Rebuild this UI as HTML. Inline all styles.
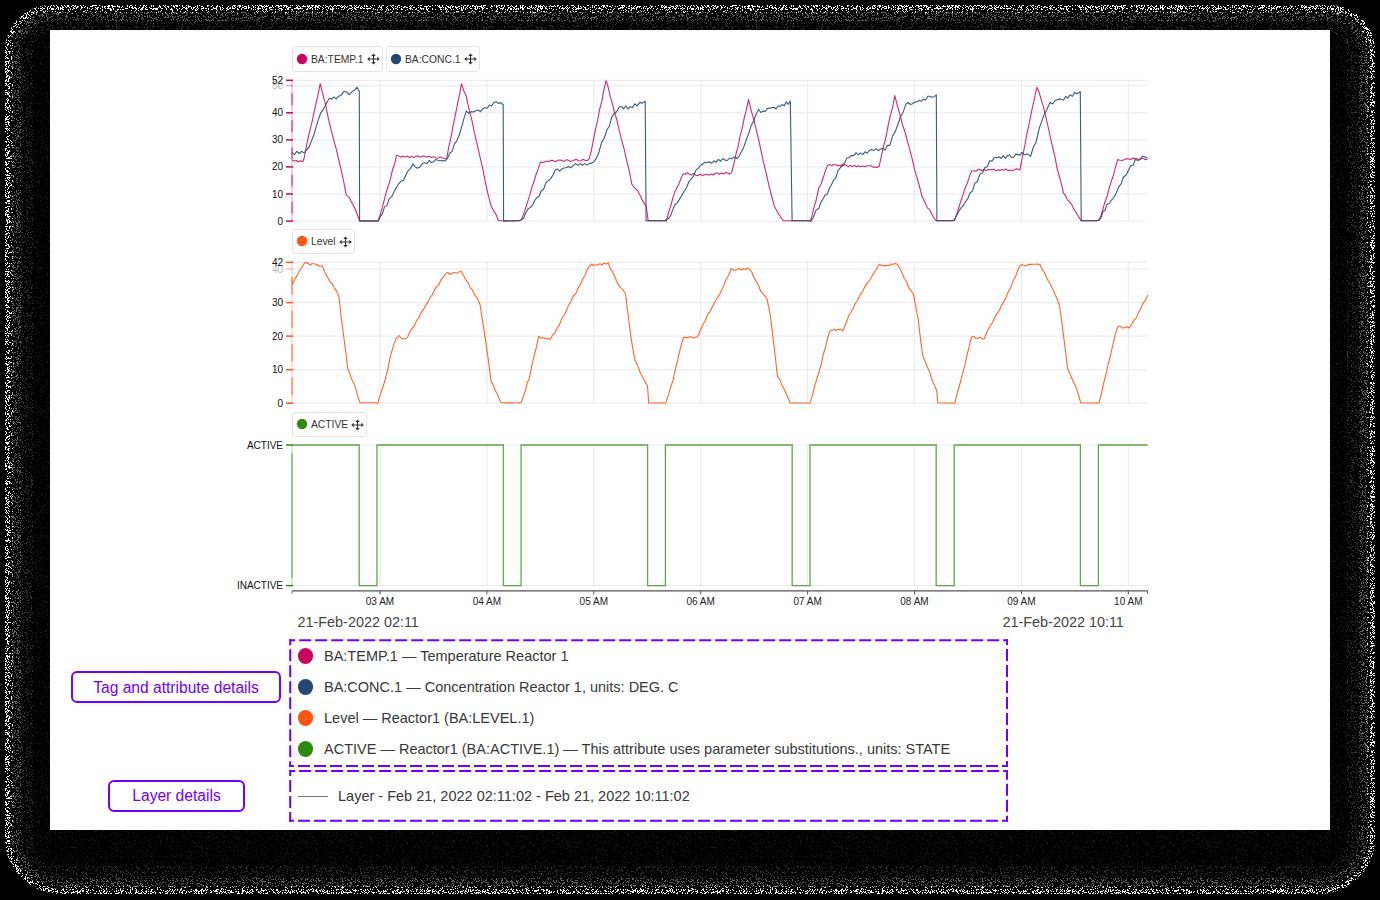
<!DOCTYPE html>
<html><head><meta charset="utf-8"><style>
html,body{margin:0;padding:0}
body{width:1380px;height:900px;background:#000;position:relative;overflow:hidden;font-family:"Liberation Sans",sans-serif}
.page{position:absolute;left:50px;top:30px;width:1280px;height:800px;background:#fff}
svg.ch{position:absolute;left:0;top:0}
svg.ch text{font-family:"Liberation Sans",sans-serif;font-size:10px}
.chip{position:absolute;height:25.5px;border:1px solid #e4e4e4;border-radius:3px;background:#fff;box-sizing:border-box}
.chip .dot{position:absolute;left:1.5px;top:4.6px}
.chip .cl{position:absolute;left:18px;top:6.5px;font-size:10.3px;color:#333;line-height:12px;white-space:nowrap}
.chip .mv{position:absolute;right:2.5px;top:6.2px}
.date{position:absolute;top:613.5px;font-size:14.4px;color:#444;white-space:nowrap}
.li{position:absolute;left:324px;font-size:14.5px;color:#383838;white-space:nowrap;line-height:16px}
.ld{position:absolute;left:297.6px;width:15.6px;height:15.6px;border-radius:50%}
.ann{position:absolute;border:2px solid #7000ff;border-radius:6px;box-sizing:border-box;color:#7000ff;font-size:15.6px;text-align:center;white-space:nowrap}
</style></head><body>
<svg style="position:absolute;left:0;top:0" width="1380" height="900"><defs><filter id="r0" x="0" y="0" width="1380" height="900" filterUnits="userSpaceOnUse" color-interpolation-filters="sRGB"><feTurbulence type="fractalNoise" baseFrequency="1.2" numOctaves="2" seed="3"/><feColorMatrix type="matrix" values="0 0 0 0 0.09  0 0 0 0 0.09  0 0 0 0 0.09  1 0 0 0 0"/><feComponentTransfer><feFuncA type="discrete" tableValues="0 0 0 0 0 0 0 0 0 0 0 0 0 1 1 1 1 1 1 1"/></feComponentTransfer><feComposite in2="SourceAlpha" operator="in"/></filter><filter id="r1" x="0" y="0" width="1380" height="900" filterUnits="userSpaceOnUse" color-interpolation-filters="sRGB"><feTurbulence type="fractalNoise" baseFrequency="1.2" numOctaves="2" seed="7"/><feColorMatrix type="matrix" values="0 0 0 0 0.22  0 0 0 0 0.22  0 0 0 0 0.22  1 0 0 0 0"/><feComponentTransfer><feFuncA type="discrete" tableValues="0 0 0 0 0 0 0 0 0 0 0 0 0 1 1 1 1 1 1 1"/></feComponentTransfer><feComposite in2="SourceAlpha" operator="in"/></filter><filter id="r2" x="0" y="0" width="1380" height="900" filterUnits="userSpaceOnUse" color-interpolation-filters="sRGB"><feTurbulence type="fractalNoise" baseFrequency="1.2" numOctaves="2" seed="11"/><feColorMatrix type="matrix" values="0 0 0 0 0.38  0 0 0 0 0.38  0 0 0 0 0.38  1 0 0 0 0"/><feComponentTransfer><feFuncA type="discrete" tableValues="0 0 0 0 0 0 0 0 0 0 0 0 1 1 1 1 1 1 1 1"/></feComponentTransfer><feComposite in2="SourceAlpha" operator="in"/></filter><filter id="r3" x="0" y="0" width="1380" height="900" filterUnits="userSpaceOnUse" color-interpolation-filters="sRGB"><feTurbulence type="fractalNoise" baseFrequency="1.2" numOctaves="2" seed="15"/><feColorMatrix type="matrix" values="0 0 0 0 0.7  0 0 0 0 0.7  0 0 0 0 0.7  1 0 0 0 0"/><feComponentTransfer><feFuncA type="discrete" tableValues="0 0 0 0 0 0 0 0 0 0 0 0 0 0 1 1 1 1 1 1"/></feComponentTransfer><feComposite in2="SourceAlpha" operator="in"/></filter><filter id="r4" x="0" y="0" width="1380" height="900" filterUnits="userSpaceOnUse" color-interpolation-filters="sRGB"><feTurbulence type="fractalNoise" baseFrequency="1.2" numOctaves="2" seed="19"/><feColorMatrix type="matrix" values="0 0 0 0 1.0  0 0 0 0 1.0  0 0 0 0 1.0  1 0 0 0 0"/><feComponentTransfer><feFuncA type="discrete" tableValues="0 0 0 0 0 0 0 0 0 0 0 1 1 1 1 1 1 1 1 1"/></feComponentTransfer><feComposite in2="SourceAlpha" operator="in"/></filter><filter id="r5" x="0" y="0" width="1380" height="900" filterUnits="userSpaceOnUse" color-interpolation-filters="sRGB"><feTurbulence type="fractalNoise" baseFrequency="1.2" numOctaves="2" seed="23"/><feColorMatrix type="matrix" values="0 0 0 0 1.0  0 0 0 0 1.0  0 0 0 0 1.0  1 0 0 0 0"/><feComponentTransfer><feFuncA type="discrete" tableValues="0 0 0 0 0 0 0 0 0 0 0 0 0 0 1 1 1 1 1 1"/></feComponentTransfer><feComposite in2="SourceAlpha" operator="in"/></filter></defs><rect x="0" y="0" width="1380" height="900" fill="#000"/><g filter="url(#r0)"><path d="M51,5 H1329 A46,46 0 0 1 1375,51 V838 A56,56 0 0 1 1319,894 H61 A56,56 0 0 1 5,838 V51 A46,46 0 0 1 51,5 Z" fill="#fff"/></g><g filter="url(#r1)"><path d="M51.0,26.0 H1329.0 A25.0,25.0 0 0 1 1354.0,51.0 V838.0 A35.0,35.0 0 0 1 1319.0,873.0 H61.0 A35.0,35.0 0 0 1 26.0,838.0 V51.0 A25.0,25.0 0 0 1 51.0,26.0 Z" fill="none" stroke="#fff" stroke-width="14"/></g><g filter="url(#r2)"><path d="M51.0,16.5 H1329.0 A34.5,34.5 0 0 1 1363.5,51.0 V838.0 A44.5,44.5 0 0 1 1319.0,882.5 H61.0 A44.5,44.5 0 0 1 16.5,838.0 V51.0 A34.5,34.5 0 0 1 51.0,16.5 Z" fill="none" stroke="#fff" stroke-width="9"/></g><g filter="url(#r3)"><path d="M51.0,11.0 H1329.0 A40.0,40.0 0 0 1 1369.0,51.0 V838.0 A50.0,50.0 0 0 1 1319.0,888.0 H61.0 A50.0,50.0 0 0 1 11.0,838.0 V51.0 A40.0,40.0 0 0 1 51.0,11.0 Z" fill="none" stroke="#fff" stroke-width="6"/></g><g filter="url(#r4)"><path d="M51.0,7.5 H1329.0 A43.5,43.5 0 0 1 1372.5,51.0 V838.0 A53.5,53.5 0 0 1 1319.0,891.5 H61.0 A53.5,53.5 0 0 1 7.5,838.0 V51.0 A43.5,43.5 0 0 1 51.0,7.5 Z" fill="none" stroke="#fff" stroke-width="5"/></g><g filter="url(#r5)"><path d="M51.0,11.0 H1329.0 A40.0,40.0 0 0 1 1369.0,51.0 V838.0 A50.0,50.0 0 0 1 1319.0,888.0 H61.0 A50.0,50.0 0 0 1 11.0,838.0 V51.0 A40.0,40.0 0 0 1 51.0,11.0 Z" fill="none" stroke="#fff" stroke-width="4"/></g></svg>
<div class="page"></div>
<svg class="ch" width="1380" height="900" viewBox="0 0 1380 900">
<line x1="380.0" y1="80" x2="380.0" y2="221" stroke="#e9e9e9" stroke-width="1"/>
<line x1="380.0" y1="262" x2="380.0" y2="403.5" stroke="#e9e9e9" stroke-width="1"/>
<line x1="380.0" y1="445" x2="380.0" y2="586" stroke="#e9e9e9" stroke-width="1"/>
<line x1="486.9" y1="80" x2="486.9" y2="221" stroke="#e9e9e9" stroke-width="1"/>
<line x1="486.9" y1="262" x2="486.9" y2="403.5" stroke="#e9e9e9" stroke-width="1"/>
<line x1="486.9" y1="445" x2="486.9" y2="586" stroke="#e9e9e9" stroke-width="1"/>
<line x1="593.8" y1="80" x2="593.8" y2="221" stroke="#e9e9e9" stroke-width="1"/>
<line x1="593.8" y1="262" x2="593.8" y2="403.5" stroke="#e9e9e9" stroke-width="1"/>
<line x1="593.8" y1="445" x2="593.8" y2="586" stroke="#e9e9e9" stroke-width="1"/>
<line x1="700.7" y1="80" x2="700.7" y2="221" stroke="#e9e9e9" stroke-width="1"/>
<line x1="700.7" y1="262" x2="700.7" y2="403.5" stroke="#e9e9e9" stroke-width="1"/>
<line x1="700.7" y1="445" x2="700.7" y2="586" stroke="#e9e9e9" stroke-width="1"/>
<line x1="807.6" y1="80" x2="807.6" y2="221" stroke="#e9e9e9" stroke-width="1"/>
<line x1="807.6" y1="262" x2="807.6" y2="403.5" stroke="#e9e9e9" stroke-width="1"/>
<line x1="807.6" y1="445" x2="807.6" y2="586" stroke="#e9e9e9" stroke-width="1"/>
<line x1="914.5" y1="80" x2="914.5" y2="221" stroke="#e9e9e9" stroke-width="1"/>
<line x1="914.5" y1="262" x2="914.5" y2="403.5" stroke="#e9e9e9" stroke-width="1"/>
<line x1="914.5" y1="445" x2="914.5" y2="586" stroke="#e9e9e9" stroke-width="1"/>
<line x1="1021.4" y1="80" x2="1021.4" y2="221" stroke="#e9e9e9" stroke-width="1"/>
<line x1="1021.4" y1="262" x2="1021.4" y2="403.5" stroke="#e9e9e9" stroke-width="1"/>
<line x1="1021.4" y1="445" x2="1021.4" y2="586" stroke="#e9e9e9" stroke-width="1"/>
<line x1="1128.3" y1="80" x2="1128.3" y2="221" stroke="#e9e9e9" stroke-width="1"/>
<line x1="1128.3" y1="262" x2="1128.3" y2="403.5" stroke="#e9e9e9" stroke-width="1"/>
<line x1="1128.3" y1="445" x2="1128.3" y2="586" stroke="#e9e9e9" stroke-width="1"/>
<line x1="292.0" y1="221.1" x2="1147.6" y2="221.1" stroke="#e9e9e9" stroke-width="1"/>
<line x1="292.0" y1="194.0" x2="1147.6" y2="194.0" stroke="#e9e9e9" stroke-width="1"/>
<line x1="292.0" y1="166.9" x2="1147.6" y2="166.9" stroke="#e9e9e9" stroke-width="1"/>
<line x1="292.0" y1="139.9" x2="1147.6" y2="139.9" stroke="#e9e9e9" stroke-width="1"/>
<line x1="292.0" y1="112.8" x2="1147.6" y2="112.8" stroke="#e9e9e9" stroke-width="1"/>
<line x1="292.0" y1="85.7" x2="1147.6" y2="85.7" stroke="#e9e9e9" stroke-width="1"/>
<line x1="292.0" y1="80.3" x2="1147.6" y2="80.3" stroke="#e9e9e9" stroke-width="1"/>
<line x1="292.0" y1="403.2" x2="1147.6" y2="403.2" stroke="#e9e9e9" stroke-width="1"/>
<line x1="292.0" y1="369.7" x2="1147.6" y2="369.7" stroke="#e9e9e9" stroke-width="1"/>
<line x1="292.0" y1="336.1" x2="1147.6" y2="336.1" stroke="#e9e9e9" stroke-width="1"/>
<line x1="292.0" y1="302.6" x2="1147.6" y2="302.6" stroke="#e9e9e9" stroke-width="1"/>
<line x1="292.0" y1="269.0" x2="1147.6" y2="269.0" stroke="#e9e9e9" stroke-width="1"/>
<line x1="292.0" y1="262.3" x2="1147.6" y2="262.3" stroke="#e9e9e9" stroke-width="1"/>
<line x1="292.0" y1="445.0" x2="1147.6" y2="445.0" stroke="#e9e9e9" stroke-width="1"/>
<line x1="292.0" y1="585.6" x2="1147.6" y2="585.6" stroke="#e9e9e9" stroke-width="1"/>
<line x1="292" y1="80.3" x2="292" y2="221.1" stroke="#c8045c" stroke-opacity="0.3" stroke-width="1.2"/>
<line x1="292" y1="201.6" x2="292" y2="213.6" stroke="#c8045c" stroke-opacity="0.75" stroke-width="1.2"/>
<line x1="292" y1="174.5" x2="292" y2="186.5" stroke="#c8045c" stroke-opacity="0.75" stroke-width="1.2"/>
<line x1="292" y1="147.4" x2="292" y2="159.4" stroke="#c8045c" stroke-opacity="0.75" stroke-width="1.2"/>
<line x1="292" y1="120.3" x2="292" y2="132.3" stroke="#c8045c" stroke-opacity="0.75" stroke-width="1.2"/>
<line x1="292" y1="93.3" x2="292" y2="105.3" stroke="#c8045c" stroke-opacity="0.75" stroke-width="1.2"/>
<line x1="286" y1="85.7" x2="293" y2="85.7" stroke="#c8045c" stroke-opacity="0.35" stroke-width="1.5"/>
<text x="283" y="89.2" text-anchor="end" fill="#111" fill-opacity="0.35">50</text>
<line x1="286" y1="80.3" x2="293" y2="80.3" stroke="#c8045c" stroke-opacity="1" stroke-width="1.5"/>
<text x="283" y="83.8" text-anchor="end" fill="#111" fill-opacity="1">52</text>
<line x1="286" y1="112.8" x2="293" y2="112.8" stroke="#c8045c" stroke-opacity="1" stroke-width="1.5"/>
<text x="283" y="116.3" text-anchor="end" fill="#111" fill-opacity="1">40</text>
<line x1="286" y1="139.9" x2="293" y2="139.9" stroke="#c8045c" stroke-opacity="1" stroke-width="1.5"/>
<text x="283" y="143.4" text-anchor="end" fill="#111" fill-opacity="1">30</text>
<line x1="286" y1="166.9" x2="293" y2="166.9" stroke="#c8045c" stroke-opacity="1" stroke-width="1.5"/>
<text x="283" y="170.4" text-anchor="end" fill="#111" fill-opacity="1">20</text>
<line x1="286" y1="194.0" x2="293" y2="194.0" stroke="#c8045c" stroke-opacity="1" stroke-width="1.5"/>
<text x="283" y="197.5" text-anchor="end" fill="#111" fill-opacity="1">10</text>
<line x1="286" y1="221.1" x2="293" y2="221.1" stroke="#c8045c" stroke-opacity="1" stroke-width="1.5"/>
<text x="283" y="224.6" text-anchor="end" fill="#111" fill-opacity="1">0</text>
<line x1="292" y1="262.3" x2="292" y2="403.2" stroke="#ff5512" stroke-opacity="0.3" stroke-width="1.2"/>
<line x1="292" y1="377.7" x2="292" y2="395.2" stroke="#ff5512" stroke-opacity="0.75" stroke-width="1.2"/>
<line x1="292" y1="344.1" x2="292" y2="361.6" stroke="#ff5512" stroke-opacity="0.75" stroke-width="1.2"/>
<line x1="292" y1="310.6" x2="292" y2="328.1" stroke="#ff5512" stroke-opacity="0.75" stroke-width="1.2"/>
<line x1="292" y1="277.0" x2="292" y2="294.5" stroke="#ff5512" stroke-opacity="0.75" stroke-width="1.2"/>
<line x1="286" y1="269.0" x2="293" y2="269.0" stroke="#ff5512" stroke-opacity="0.35" stroke-width="1.5"/>
<text x="283" y="272.5" text-anchor="end" fill="#111" fill-opacity="0.35">40</text>
<line x1="286" y1="262.3" x2="293" y2="262.3" stroke="#ff5512" stroke-opacity="1" stroke-width="1.5"/>
<text x="283" y="265.8" text-anchor="end" fill="#111" fill-opacity="1">42</text>
<line x1="286" y1="302.6" x2="293" y2="302.6" stroke="#ff5512" stroke-opacity="1" stroke-width="1.5"/>
<text x="283" y="306.1" text-anchor="end" fill="#111" fill-opacity="1">30</text>
<line x1="286" y1="336.1" x2="293" y2="336.1" stroke="#ff5512" stroke-opacity="1" stroke-width="1.5"/>
<text x="283" y="339.6" text-anchor="end" fill="#111" fill-opacity="1">20</text>
<line x1="286" y1="369.7" x2="293" y2="369.7" stroke="#ff5512" stroke-opacity="1" stroke-width="1.5"/>
<text x="283" y="373.2" text-anchor="end" fill="#111" fill-opacity="1">10</text>
<line x1="286" y1="403.2" x2="293" y2="403.2" stroke="#ff5512" stroke-opacity="1" stroke-width="1.5"/>
<text x="283" y="406.7" text-anchor="end" fill="#111" fill-opacity="1">0</text>
<line x1="292" y1="445" x2="292" y2="586" stroke="#2f8a12" stroke-opacity="0.3" stroke-width="1.2"/>
<line x1="292" y1="453" x2="292" y2="578" stroke="#2f8a12" stroke-opacity="0.6" stroke-width="1.2"/>
<line x1="286" y1="445.0" x2="293" y2="445.0" stroke="#2f8a12" stroke-width="1.5"/>
<text x="283" y="448.5" text-anchor="end" fill="#111">ACTIVE</text>
<line x1="286" y1="585.6" x2="293" y2="585.6" stroke="#2f8a12" stroke-width="1.5"/>
<text x="283" y="589.1" text-anchor="end" fill="#111">INACTIVE</text>
<line x1="292" y1="590.8" x2="1147.6" y2="590.8" stroke="#555" stroke-width="1.3"/>
<line x1="292" y1="590.8" x2="292" y2="594" stroke="#888" stroke-width="1"/>
<line x1="1147.6" y1="590.8" x2="1147.6" y2="594" stroke="#555" stroke-width="1"/>
<line x1="380.0" y1="590.8" x2="380.0" y2="594.5" stroke="#555" stroke-width="1"/>
<text x="380.0" y="604.8" text-anchor="middle" fill="#222" font-size="9.9px">03 AM</text>
<line x1="486.9" y1="590.8" x2="486.9" y2="594.5" stroke="#555" stroke-width="1"/>
<text x="486.9" y="604.8" text-anchor="middle" fill="#222" font-size="9.9px">04 AM</text>
<line x1="593.8" y1="590.8" x2="593.8" y2="594.5" stroke="#555" stroke-width="1"/>
<text x="593.8" y="604.8" text-anchor="middle" fill="#222" font-size="9.9px">05 AM</text>
<line x1="700.7" y1="590.8" x2="700.7" y2="594.5" stroke="#555" stroke-width="1"/>
<text x="700.7" y="604.8" text-anchor="middle" fill="#222" font-size="9.9px">06 AM</text>
<line x1="807.6" y1="590.8" x2="807.6" y2="594.5" stroke="#555" stroke-width="1"/>
<text x="807.6" y="604.8" text-anchor="middle" fill="#222" font-size="9.9px">07 AM</text>
<line x1="914.5" y1="590.8" x2="914.5" y2="594.5" stroke="#555" stroke-width="1"/>
<text x="914.5" y="604.8" text-anchor="middle" fill="#222" font-size="9.9px">08 AM</text>
<line x1="1021.4" y1="590.8" x2="1021.4" y2="594.5" stroke="#555" stroke-width="1"/>
<text x="1021.4" y="604.8" text-anchor="middle" fill="#222" font-size="9.9px">09 AM</text>
<line x1="1128.3" y1="590.8" x2="1128.3" y2="594.5" stroke="#555" stroke-width="1"/>
<text x="1128.3" y="604.8" text-anchor="middle" fill="#222" font-size="9.9px">10 AM</text>
<path d="M292.2,284.6 L294.4,279.7 L296.7,276.4 L298.9,271.8 L301.1,268.7 L304.4,262.9 L307.2,262.8 L310.0,264.9 L312.2,263.8 L314.4,263.8 L316.7,264.5 L318.9,266.2 L322.2,265.7 L325.0,272.4 L327.8,277.5 L330.0,281.9 L332.2,283.7 L334.4,287.9 L336.7,291.4 L338.9,296.7 L341.1,316.4 L343.3,333.5 L345.6,350.8 L347.8,368.7 L350.0,373.9 L352.2,380.4 L354.4,384.3 L357.2,394.4 L360.0,402.8 L362.2,402.8 L364.4,402.8 L366.7,402.8 L368.9,402.8 L371.1,402.8 L373.3,402.8 L375.6,402.8 L377.8,403.2 L380.4,394.2 L383.0,387.0 L385.6,377.8 L387.8,369.3 L390.0,357.6 L392.8,347.8 L395.6,339.3 L398.9,335.5 L401.1,338.0 L403.3,338.9 L405.6,338.8 L407.8,336.9 L410.0,331.7 L412.2,328.1 L414.4,326.0 L416.7,320.4 L418.9,318.0 L421.1,312.3 L423.3,309.7 L425.6,305.2 L427.8,302.6 L430.0,297.6 L432.2,295.0 L434.4,290.1 L436.7,286.6 L438.9,284.5 L441.1,279.6 L443.3,277.2 L445.6,273.5 L447.8,272.5 L450.0,274.5 L452.2,273.2 L454.4,272.5 L456.7,273.2 L458.9,271.9 L461.1,271.2 L463.3,275.0 L465.6,279.5 L467.8,282.4 L470.0,287.3 L472.2,289.8 L474.4,294.5 L477.2,298.2 L480.0,304.4 L483.3,325.9 L485.9,342.7 L488.5,361.2 L491.1,381.4 L493.1,384.8 L495.1,390.4 L497.1,393.5 L499.1,398.6 L501.1,402.8 L503.1,402.8 L505.1,402.8 L507.1,402.9 L509.1,402.9 L511.1,402.9 L513.1,402.9 L515.1,403.0 L517.1,403.0 L519.2,403.0 L521.2,402.2 L523.2,397.0 L525.2,391.1 L527.2,383.0 L529.3,378.4 L531.6,366.5 L533.9,356.4 L536.2,347.9 L538.6,336.2 L540.9,338.3 L543.2,337.5 L545.5,338.7 L547.8,338.6 L550.1,339.6 L552.5,335.2 L554.8,333.2 L557.1,328.0 L559.4,324.9 L561.7,318.7 L564.1,315.5 L566.4,310.6 L568.7,304.9 L571.0,301.7 L573.3,296.0 L575.7,293.9 L578.0,288.3 L580.3,284.6 L582.6,279.2 L584.9,275.8 L587.2,269.4 L589.6,265.9 L591.6,264.3 L593.7,265.4 L595.7,265.0 L597.8,264.9 L599.9,263.8 L601.9,265.0 L604.0,263.0 L606.1,264.1 L608.1,262.8 L610.4,269.1 L612.8,272.4 L615.1,277.2 L617.4,282.9 L619.7,286.7 L622.6,289.3 L625.5,293.7 L628.4,317.4 L631.3,339.7 L634.8,359.7 L637.7,365.6 L640.6,373.5 L642.9,377.8 L645.2,381.9 L647.5,385.9 L648.7,403.0 L650.8,403.0 L652.9,403.0 L655.0,403.0 L657.2,403.0 L659.3,403.0 L661.4,403.0 L663.5,403.0 L665.6,403.2 L668.1,396.1 L670.6,387.2 L673.0,380.4 L675.4,368.9 L677.7,359.9 L680.6,347.3 L683.5,337.3 L685.8,337.6 L688.1,337.5 L690.4,336.4 L692.8,337.9 L695.1,337.5 L697.4,336.7 L700.9,329.2 L703.2,324.0 L705.5,320.3 L707.8,314.0 L710.1,311.6 L712.5,306.4 L714.8,302.0 L717.1,297.9 L719.4,294.9 L721.7,290.1 L724.1,284.6 L726.4,278.7 L728.7,275.5 L731.0,268.7 L733.1,269.4 L735.1,270.2 L737.2,269.6 L739.3,268.4 L741.3,270.0 L743.4,268.7 L745.4,269.5 L747.5,267.9 L749.6,269.4 L751.9,272.5 L754.2,278.4 L756.5,281.6 L758.8,286.3 L761.2,292.2 L764.1,294.8 L767.0,299.0 L770.4,315.6 L772.8,335.9 L775.1,354.7 L777.4,376.1 L779.7,379.1 L782.0,385.4 L784.3,389.6 L787.2,395.7 L790.1,403.0 L792.3,403.0 L794.5,403.0 L796.7,403.0 L798.9,403.0 L801.1,403.0 L803.3,403.0 L805.5,403.0 L807.7,403.0 L809.9,403.2 L812.2,396.2 L814.5,386.7 L816.8,379.0 L819.0,372.0 L821.2,364.1 L823.4,354.0 L825.6,346.9 L827.8,337.5 L830.0,330.8 L832.1,330.4 L834.3,329.3 L836.4,330.4 L838.5,329.2 L840.6,329.4 L842.8,330.8 L845.7,324.0 L848.6,316.3 L850.9,312.0 L853.2,308.6 L855.5,303.0 L857.8,300.0 L860.1,294.6 L862.5,291.8 L864.8,286.9 L867.1,283.0 L869.4,280.7 L871.7,276.8 L874.1,272.4 L876.4,269.5 L878.7,264.8 L880.8,264.9 L882.8,265.7 L884.9,265.5 L886.9,265.6 L889.0,265.5 L891.1,264.0 L893.1,264.3 L895.2,263.5 L897.2,264.3 L899.6,267.4 L901.9,272.9 L904.2,278.3 L906.5,281.5 L908.8,287.8 L911.2,290.8 L913.5,294.6 L915.8,306.5 L918.1,318.6 L920.4,338.3 L922.8,356.2 L925.1,361.2 L927.4,367.3 L929.7,372.1 L932.0,380.1 L934.3,384.9 L936.7,390.5 L937.8,403.0 L939.9,403.0 L942.1,403.0 L944.2,403.0 L946.3,403.0 L948.4,403.0 L950.5,403.0 L952.6,403.0 L954.8,403.2 L957.2,393.0 L959.6,385.0 L962.1,374.9 L964.5,366.3 L966.8,356.0 L969.1,346.8 L971.4,337.3 L973.6,336.2 L975.7,338.3 L977.8,338.4 L980.0,337.2 L982.1,338.9 L984.2,338.8 L987.1,331.8 L990.0,325.9 L992.3,322.7 L994.6,317.9 L997.0,313.4 L999.3,310.7 L1001.6,305.1 L1003.9,301.4 L1006.2,296.8 L1008.6,291.1 L1010.9,287.3 L1013.2,280.1 L1015.5,276.7 L1017.8,270.0 L1020.1,265.5 L1022.3,264.6 L1024.5,265.9 L1026.7,265.8 L1028.9,264.3 L1031.1,264.4 L1033.3,264.2 L1035.5,264.3 L1037.7,264.0 L1039.9,264.6 L1041.9,268.9 L1043.9,271.7 L1045.9,275.8 L1048.0,280.5 L1050.3,284.0 L1052.6,289.1 L1054.9,294.3 L1057.2,299.3 L1059.6,306.0 L1061.6,320.5 L1063.6,336.3 L1065.7,352.9 L1067.7,368.8 L1069.7,373.1 L1071.7,378.0 L1073.8,383.1 L1075.8,386.6 L1078.3,394.3 L1080.9,403.0 L1082.9,403.0 L1084.9,403.0 L1086.9,403.0 L1088.9,403.0 L1090.9,403.0 L1093.0,403.0 L1095.0,403.0 L1097.0,403.0 L1099.0,402.6 L1101.3,394.2 L1103.6,383.2 L1105.9,374.5 L1108.3,363.5 L1110.6,355.0 L1112.9,344.3 L1115.2,334.9 L1117.5,327.3 L1119.9,326.0 L1122.2,327.9 L1124.5,327.8 L1126.8,326.8 L1129.1,327.9 L1131.4,324.6 L1133.8,320.4 L1136.1,318.1 L1138.4,312.6 L1140.7,308.8 L1143.0,303.3 L1145.4,300.2 L1147.7,295.2" fill="none" stroke="#ff5512" stroke-opacity="0.9" stroke-width="1.1" stroke-linejoin="round"/>
<path d="M292.1,160.3 L294.2,161.1 L296.4,160.5 L298.5,161.8 L300.6,160.8 L302.8,161.8 L304.2,158.0 L308.1,137.9 L309.9,130.4 L312.1,121.6 L314.3,111.1 L317.9,95.3 L320.2,83.6 L323.2,95.7 L325.9,106.1 L328.5,119.1 L331.2,130.2 L333.6,139.7 L335.9,147.7 L338.3,157.8 L341.0,169.1 L343.6,181.2 L346.3,195.1 L349.0,197.1 L351.3,201.7 L353.7,206.0 L356.1,211.3 L359.6,220.8 L361.7,220.8 L363.8,220.8 L365.9,220.8 L367.9,220.8 L370.0,220.8 L372.1,220.8 L374.2,220.8 L376.2,220.8 L378.3,220.2 L380.3,214.3 L382.4,207.1 L384.4,199.7 L386.4,191.4 L388.5,185.5 L390.5,178.7 L392.5,169.8 L394.6,164.2 L396.6,155.2 L398.7,155.9 L400.9,157.3 L403.0,156.1 L405.1,157.1 L407.3,156.1 L409.4,157.5 L411.6,156.2 L413.8,157.6 L416.1,156.1 L418.3,156.0 L420.5,157.4 L422.7,155.9 L425.0,156.5 L427.2,157.1 L429.3,156.3 L431.5,157.4 L433.7,156.6 L435.9,158.0 L438.0,158.2 L440.2,156.9 L442.4,158.0 L444.5,158.7 L446.7,158.8 L448.8,146.9 L450.9,137.6 L453.0,126.1 L455.1,116.2 L457.3,105.1 L459.4,95.1 L461.5,83.7 L463.9,91.3 L466.3,96.3 L468.3,106.0 L470.3,114.1 L472.4,122.3 L474.4,132.8 L476.4,140.8 L478.5,150.4 L480.5,159.2 L482.9,169.2 L485.2,181.7 L487.6,192.4 L491.1,206.1 L493.5,210.6 L495.9,214.1 L498.3,220.2 L500.3,220.8 L502.4,220.8 L504.5,220.8 L506.6,220.8 L508.7,220.8 L510.8,220.8 L512.9,220.8 L515.0,220.8 L517.1,220.8 L519.2,220.8 L521.3,219.9 L523.4,214.6 L525.5,208.6 L527.6,201.9 L529.8,195.2 L531.9,187.3 L534.0,181.5 L536.1,174.3 L538.2,168.9 L540.3,162.1 L542.5,162.5 L544.6,161.9 L546.8,161.0 L548.9,161.6 L551.1,160.3 L553.2,160.5 L555.3,161.9 L557.5,160.2 L559.6,160.1 L561.8,160.2 L563.9,161.6 L566.1,159.8 L568.2,160.1 L570.3,161.5 L572.4,160.8 L574.5,160.0 L576.6,159.4 L578.7,161.0 L580.8,160.8 L582.9,159.4 L585.0,160.2 L587.1,160.6 L589.2,158.8 L591.3,150.7 L593.4,140.1 L595.5,129.3 L597.6,120.4 L599.7,109.2 L601.9,100.7 L604.0,89.2 L606.1,80.7 L608.1,86.8 L610.2,96.4 L612.3,103.6 L614.7,113.0 L617.0,120.7 L619.4,131.0 L621.8,140.6 L624.1,148.8 L626.5,159.7 L629.2,170.7 L631.8,184.2 L634.5,187.9 L637.2,190.1 L639.8,194.8 L642.5,200.4 L646.1,206.1 L648.2,220.8 L650.2,220.8 L652.3,220.8 L654.3,220.8 L656.3,220.8 L658.4,220.8 L660.4,220.8 L662.4,220.8 L664.5,220.8 L666.5,221.1 L668.6,212.2 L670.6,206.5 L672.7,198.4 L674.8,192.1 L677.0,187.7 L679.1,183.6 L681.2,177.7 L683.4,173.8 L685.4,174.3 L687.4,172.8 L689.5,174.2 L691.5,175.1 L693.5,173.4 L695.6,175.2 L697.6,175.8 L700.1,174.3 L702.5,175.4 L705.0,174.4 L707.1,174.5 L709.1,175.2 L711.2,174.0 L713.2,175.0 L715.3,173.2 L717.3,173.1 L719.4,174.3 L721.4,173.0 L723.5,174.0 L725.5,172.6 L727.6,173.0 L729.6,174.2 L731.7,172.4 L733.8,164.2 L735.9,154.3 L738.0,146.7 L740.1,135.8 L742.2,128.4 L744.3,117.6 L746.4,109.8 L748.5,99.3 L751.2,110.6 L753.9,120.0 L756.5,130.8 L758.9,140.7 L761.3,152.2 L763.6,162.9 L766.3,173.7 L769.0,185.8 L771.6,196.0 L774.3,206.2 L777.9,212.8 L780.5,216.8 L783.2,220.8 L785.3,220.8 L787.4,220.8 L789.6,220.8 L791.7,220.8 L793.8,220.8 L795.9,220.8 L798.0,220.8 L800.1,220.8 L802.3,220.8 L804.4,220.8 L806.5,220.8 L808.6,220.8 L810.7,221.1 L813.4,209.3 L816.1,200.3 L818.7,188.1 L821.0,184.0 L823.2,177.8 L825.4,170.6 L827.6,165.4 L829.7,164.4 L831.7,165.6 L833.8,164.5 L835.9,164.7 L837.9,165.9 L840.0,165.0 L842.1,166.2 L844.1,164.7 L846.2,165.1 L848.2,166.8 L850.3,165.4 L852.4,166.5 L854.4,165.4 L856.5,166.7 L858.5,165.8 L860.6,166.8 L862.7,166.1 L864.7,166.8 L866.8,165.8 L868.9,165.8 L870.9,165.7 L873.0,167.1 L875.0,167.1 L877.1,167.5 L879.2,166.0 L881.4,156.1 L883.6,145.9 L885.9,137.3 L888.1,125.7 L890.3,115.6 L892.6,107.3 L894.8,95.6 L897.3,105.5 L899.8,113.8 L902.3,124.2 L904.9,131.5 L907.6,141.9 L910.0,150.4 L912.3,159.3 L914.7,170.2 L917.2,178.2 L919.6,186.9 L922.1,196.6 L924.8,201.9 L927.4,207.9 L929.7,209.8 L931.9,214.6 L934.1,218.0 L936.3,220.8 L938.3,220.8 L940.4,220.8 L942.4,220.8 L944.4,220.8 L946.4,220.8 L948.4,220.8 L950.4,220.8 L952.5,220.8 L954.5,220.5 L956.6,214.6 L958.7,208.0 L960.9,200.8 L963.0,194.9 L965.2,187.7 L967.4,182.9 L969.7,175.9 L971.9,170.7 L973.9,170.8 L975.9,171.3 L977.9,169.8 L979.9,169.3 L981.9,170.7 L983.9,169.3 L985.9,170.9 L987.9,169.5 L989.9,169.8 L991.9,169.5 L993.9,169.3 L995.9,170.9 L997.9,169.7 L999.9,170.5 L1001.9,169.4 L1003.9,170.3 L1005.9,168.9 L1007.9,170.6 L1009.9,170.0 L1011.9,170.5 L1013.9,170.1 L1015.9,169.1 L1017.9,168.9 L1019.9,170.1 L1022.3,157.5 L1024.6,146.7 L1027.0,133.1 L1029.4,122.5 L1031.9,109.8 L1034.3,99.2 L1036.8,87.2 L1038.9,91.8 L1040.9,98.5 L1043.0,105.3 L1045.4,115.1 L1047.7,125.0 L1050.1,136.0 L1052.5,146.7 L1054.9,156.6 L1057.2,168.6 L1059.3,176.5 L1061.4,183.9 L1063.4,193.2 L1065.4,195.4 L1067.4,199.8 L1069.4,201.6 L1071.4,204.1 L1073.9,209.3 L1076.3,212.7 L1078.8,217.1 L1081.2,220.8 L1083.4,220.8 L1085.7,220.8 L1087.9,220.8 L1090.1,220.8 L1092.3,220.8 L1094.6,220.8 L1096.8,220.8 L1099.0,220.3 L1101.0,215.5 L1103.0,209.0 L1105.0,201.7 L1107.0,196.7 L1109.1,188.5 L1111.3,181.3 L1113.4,175.1 L1115.5,167.4 L1117.7,159.4 L1119.8,160.3 L1121.9,160.5 L1124.1,159.8 L1126.2,158.8 L1128.3,158.9 L1130.5,159.6 L1132.6,158.4 L1134.7,158.4 L1136.9,158.8 L1139.0,159.5 L1141.1,158.3 L1143.3,158.2 L1145.4,159.8 L1147.5,158.9" fill="none" stroke="#c8045c" stroke-opacity="0.85" stroke-width="1.1" stroke-linejoin="round"/>
<path d="M292.1,152.4 L294.5,154.7 L296.8,151.3 L299.2,153.5 L301.6,151.4 L304.0,152.8 L306.3,150.4 L309.0,147.2 L311.7,140.4 L313.9,134.8 L316.1,126.8 L318.3,119.8 L320.5,113.4 L323.2,109.4 L325.9,104.3 L329.4,98.1 L331.7,99.3 L333.9,96.8 L336.1,98.8 L338.3,96.3 L341.0,95.4 L343.6,91.6 L346.3,91.7 L349.0,94.7 L352.5,91.3 L354.8,90.2 L357.0,87.2 L359.3,91.3 L359.6,221.1 L361.7,221.1 L363.8,221.1 L365.9,221.1 L367.9,221.1 L370.0,221.1 L372.1,221.1 L374.2,221.1 L376.2,221.1 L378.3,221.1 L380.4,216.3 L382.4,213.8 L384.5,206.9 L386.9,205.4 L389.3,198.6 L391.6,196.7 L394.0,191.7 L396.4,187.5 L398.7,183.8 L401.1,181.2 L403.5,180.2 L405.8,175.3 L408.2,170.4 L410.6,168.6 L413.0,163.9 L415.2,166.9 L417.4,168.3 L419.8,167.1 L422.3,163.6 L424.7,162.8 L427.2,163.5 L429.3,160.4 L431.4,162.6 L433.6,161.8 L435.7,159.5 L437.8,160.2 L440.3,160.7 L442.7,160.5 L445.2,161.0 L447.6,158.1 L449.8,153.2 L452.1,151.4 L454.4,143.9 L456.8,140.8 L459.2,135.3 L461.5,127.3 L463.9,118.7 L466.3,110.9 L468.6,113.4 L471.0,111.6 L473.4,112.0 L475.7,110.7 L478.1,110.0 L480.5,111.7 L482.7,108.7 L484.9,107.7 L487.2,108.3 L489.4,105.1 L491.6,106.0 L493.8,102.5 L496.0,101.8 L498.3,103.4 L500.7,102.7 L503.2,104.7 L503.6,221.1 L505.8,221.1 L508.0,221.0 L510.2,221.0 L512.4,220.9 L514.7,220.9 L516.9,220.8 L519.1,220.8 L521.3,219.8 L523.6,218.2 L525.9,212.5 L528.2,208.8 L530.5,207.4 L532.7,204.8 L534.8,200.3 L536.9,197.7 L539.1,196.2 L541.2,191.0 L543.6,189.3 L545.9,182.6 L548.3,180.9 L550.7,178.6 L553.1,174.8 L555.4,169.8 L557.6,169.1 L559.7,171.0 L561.8,169.1 L564.0,168.0 L566.1,167.8 L568.5,166.5 L570.8,167.8 L573.2,165.6 L575.6,163.6 L577.9,165.4 L580.3,163.6 L582.5,165.4 L584.7,163.6 L587.0,165.1 L589.2,163.6 L591.6,163.1 L593.9,161.8 L596.3,158.4 L599.0,152.0 L601.6,142.4 L604.3,138.0 L607.0,129.7 L609.3,126.3 L611.7,117.4 L614.1,113.6 L616.7,111.8 L619.4,106.7 L621.5,106.7 L623.7,109.0 L625.8,105.8 L627.9,109.0 L630.1,106.7 L632.4,107.6 L634.8,103.9 L637.2,105.9 L639.8,102.4 L642.5,103.1 L645.2,101.1 L646.1,220.8 L648.1,220.8 L650.1,220.8 L652.2,220.8 L654.2,220.8 L656.3,220.8 L658.3,220.8 L660.4,220.8 L662.4,220.8 L664.5,220.8 L666.5,219.1 L668.6,218.4 L670.6,215.6 L672.7,209.9 L674.9,204.7 L677.2,202.9 L679.4,199.4 L681.6,195.7 L684.0,191.5 L686.3,188.0 L688.7,182.2 L691.1,179.0 L693.4,176.4 L695.8,170.4 L698.5,168.0 L701.1,165.0 L705.0,162.2 L707.2,162.5 L709.4,161.9 L711.7,163.2 L713.9,160.8 L716.1,162.3 L718.3,159.4 L720.6,161.2 L722.8,158.5 L725.1,160.1 L727.3,160.5 L729.6,158.0 L731.9,158.8 L734.2,156.9 L736.5,158.5 L738.8,156.7 L741.1,152.3 L743.5,147.9 L745.9,140.7 L748.5,134.0 L751.2,125.7 L753.9,120.2 L756.5,113.3 L758.7,109.5 L760.9,112.5 L763.1,110.9 L765.2,111.5 L767.4,108.4 L769.6,108.2 L771.7,107.6 L773.9,107.3 L776.1,109.0 L778.1,105.8 L780.1,106.6 L782.2,104.4 L784.2,106.0 L786.2,101.9 L788.3,104.3 L790.3,100.9 L792.1,220.8 L794.2,220.8 L796.2,220.8 L798.3,220.8 L800.4,220.8 L802.4,220.8 L804.5,220.8 L806.6,220.8 L808.7,220.8 L810.7,221.1 L813.4,217.3 L816.1,209.9 L818.7,208.7 L820.9,202.4 L823.0,199.0 L825.1,195.0 L827.3,194.1 L829.4,188.5 L831.5,184.4 L833.7,179.9 L835.8,178.1 L837.9,170.7 L840.1,168.1 L842.3,164.5 L844.5,163.4 L846.7,158.1 L848.9,157.8 L851.3,155.5 L853.7,155.6 L856.1,152.7 L858.3,154.8 L860.5,152.9 L862.7,154.6 L864.9,151.8 L867.2,153.2 L869.4,150.5 L871.6,149.4 L873.8,150.7 L876.1,148.7 L878.3,150.9 L880.5,149.0 L882.7,148.6 L885.1,149.9 L887.5,145.3 L889.8,145.4 L892.5,136.1 L895.2,131.6 L897.8,124.8 L900.5,116.8 L903.2,112.2 L905.8,104.4 L908.0,102.5 L910.3,104.5 L912.5,103.8 L914.7,102.0 L915.0,102.2 L917.1,101.7 L919.3,100.6 L921.4,101.1 L923.5,99.1 L925.7,99.9 L927.8,96.2 L929.9,96.3 L932.1,97.3 L934.2,96.7 L936.3,94.9 L936.9,220.8 L939.1,220.8 L941.3,220.8 L943.5,220.8 L945.7,220.8 L947.9,220.8 L950.1,220.8 L952.3,220.8 L954.5,219.5 L956.7,215.5 L959.0,211.1 L961.2,207.6 L963.4,205.5 L965.7,201.5 L967.9,198.4 L970.1,192.8 L972.5,191.1 L974.9,183.2 L977.2,181.8 L979.9,174.2 L982.6,172.7 L984.9,167.6 L987.3,166.7 L989.7,160.8 L992.0,161.1 L994.4,157.2 L996.8,157.7 L998.9,156.7 L1001.0,158.4 L1003.2,155.7 L1005.3,158.3 L1007.4,155.6 L1009.5,154.9 L1011.6,157.5 L1013.7,157.1 L1015.7,154.1 L1017.8,154.6 L1019.9,155.1 L1022.0,152.4 L1024.2,155.0 L1026.3,154.1 L1028.4,154.3 L1030.6,156.3 L1033.2,147.5 L1035.9,142.5 L1039.4,127.8 L1041.8,121.1 L1044.2,114.4 L1046.6,110.1 L1050.1,102.3 L1052.5,104.0 L1054.9,100.7 L1057.2,99.7 L1059.4,98.9 L1061.5,99.5 L1063.6,99.9 L1065.8,96.3 L1067.9,98.2 L1070.1,94.7 L1072.3,96.4 L1074.6,92.3 L1076.8,93.8 L1080.3,91.7 L1081.2,220.8 L1083.4,220.8 L1085.7,220.8 L1087.9,220.8 L1090.1,220.8 L1092.3,220.8 L1094.6,220.8 L1096.8,220.8 L1099.0,219.7 L1101.0,218.1 L1103.0,211.4 L1105.0,210.5 L1107.0,204.2 L1109.2,203.4 L1111.4,200.3 L1113.7,197.5 L1115.9,193.7 L1118.6,187.1 L1121.2,183.6 L1123.6,176.8 L1126.0,175.2 L1128.3,170.8 L1130.7,165.8 L1133.1,165.2 L1135.4,159.2 L1137.8,160.5 L1140.2,159.5 L1142.6,156.1 L1145.0,156.9 L1147.5,158.0" fill="none" stroke="#234a6e" stroke-opacity="0.9" stroke-width="1.1" stroke-linejoin="round"/>
<path d="M292.0,445.0 L359.2,445.0 L359.2,585.6 L377.0,585.6 L377.0,445.0 L503.4,445.0 L503.4,585.6 L521.1,585.6 L521.1,445.0 L647.6,445.0 L647.6,585.6 L665.4,585.6 L665.4,445.0 L792.2,445.0 L792.2,585.6 L810.0,585.6 L810.0,445.0 L936.2,445.0 L936.2,585.6 L954.2,585.6 L954.2,445.0 L1080.4,445.0 L1080.4,585.6 L1098.4,585.6 L1098.4,445.0 L1147.6,445.0" fill="none" stroke="#2f8a12" stroke-opacity="0.75" stroke-width="1.3"/>
<line x1="289.2" y1="640.2" x2="1008" y2="640.2" stroke="#7000ff" stroke-width="2" stroke-dasharray="12 4" stroke-dashoffset="6"/><line x1="290.2" y1="639.2" x2="290.2" y2="767" stroke="#7000ff" stroke-width="2" stroke-dasharray="12 4" stroke-dashoffset="6"/><line x1="1008" y1="766" x2="289.2" y2="766" stroke="#7000ff" stroke-width="2" stroke-dasharray="12 4" stroke-dashoffset="6"/><line x1="1007" y1="767" x2="1007" y2="639.2" stroke="#7000ff" stroke-width="2" stroke-dasharray="12 4" stroke-dashoffset="6"/><line x1="289.2" y1="771" x2="1008" y2="771" stroke="#7000ff" stroke-width="2" stroke-dasharray="12 4" stroke-dashoffset="6"/><line x1="290.2" y1="770" x2="290.2" y2="821.8" stroke="#7000ff" stroke-width="2" stroke-dasharray="12 4" stroke-dashoffset="6"/><line x1="1008" y1="820.8" x2="289.2" y2="820.8" stroke="#7000ff" stroke-width="2" stroke-dasharray="12 4" stroke-dashoffset="6"/><line x1="1007" y1="821.8" x2="1007" y2="770" stroke="#7000ff" stroke-width="2" stroke-dasharray="12 4" stroke-dashoffset="6"/>
</svg>
<div class="chip" style="left:292px;top:46px;width:91px"><svg class="dot" width="14" height="14"><circle cx="7" cy="7" r="5.2" fill="#c8045c"/></svg><span class="cl">BA:TEMP.1</span><svg class="mv" width="13" height="12" viewBox="0 0 13 12"><path d="M6.5 0.4 L8.8 2.9 H4.2 Z M6.5 11.6 L8.8 9.1 H4.2 Z M0.2 6 L2.7 3.8 V8.2 Z M12.8 6 L10.3 3.8 V8.2 Z" fill="#333"/><path d="M6.5 2.5 V9.5 M2.5 6 H10.5" stroke="#333" stroke-width="1.1"/></svg></div>
<div class="chip" style="left:386px;top:46px;width:94px"><svg class="dot" width="14" height="14"><circle cx="7" cy="7" r="5.2" fill="#234a6e"/></svg><span class="cl">BA:CONC.1</span><svg class="mv" width="13" height="12" viewBox="0 0 13 12"><path d="M6.5 0.4 L8.8 2.9 H4.2 Z M6.5 11.6 L8.8 9.1 H4.2 Z M0.2 6 L2.7 3.8 V8.2 Z M12.8 6 L10.3 3.8 V8.2 Z" fill="#333"/><path d="M6.5 2.5 V9.5 M2.5 6 H10.5" stroke="#333" stroke-width="1.1"/></svg></div>
<div class="chip" style="left:292px;top:228.8px;width:63px"><svg class="dot" width="14" height="14"><circle cx="7" cy="7" r="5.2" fill="#ff5512"/></svg><span class="cl">Level</span><svg class="mv" width="13" height="12" viewBox="0 0 13 12"><path d="M6.5 0.4 L8.8 2.9 H4.2 Z M6.5 11.6 L8.8 9.1 H4.2 Z M0.2 6 L2.7 3.8 V8.2 Z M12.8 6 L10.3 3.8 V8.2 Z" fill="#333"/><path d="M6.5 2.5 V9.5 M2.5 6 H10.5" stroke="#333" stroke-width="1.1"/></svg></div>
<div class="chip" style="left:292px;top:411.5px;width:75px"><svg class="dot" width="14" height="14"><circle cx="7" cy="7" r="5.2" fill="#2f8a12"/></svg><span class="cl">ACTIVE</span><svg class="mv" width="13" height="12" viewBox="0 0 13 12"><path d="M6.5 0.4 L8.8 2.9 H4.2 Z M6.5 11.6 L8.8 9.1 H4.2 Z M0.2 6 L2.7 3.8 V8.2 Z M12.8 6 L10.3 3.8 V8.2 Z" fill="#333"/><path d="M6.5 2.5 V9.5 M2.5 6 H10.5" stroke="#333" stroke-width="1.1"/></svg></div>
<div class="date" style="left:297.5px">21-Feb-2022 02:11</div>
<div class="date" style="left:1002.5px">21-Feb-2022 10:11</div>
<span class="ld" style="top:648.2px;background:#c8045c"></span><div class="li" style="top:648px">BA:TEMP.1 — Temperature Reactor 1</div>
<span class="ld" style="top:679.2px;background:#234a6e"></span><div class="li" style="top:679px">BA:CONC.1 — Concentration Reactor 1, units: DEG. C</div>
<span class="ld" style="top:710.2px;background:#ff5512"></span><div class="li" style="top:710px">Level — Reactor1 (BA:LEVEL.1)</div>
<span class="ld" style="top:741.2px;background:#2f8a12"></span><div class="li" style="top:741px">ACTIVE — Reactor1 (BA:ACTIVE.1) — This attribute uses parameter substitutions., units: STATE</div>
<div style="position:absolute;left:298px;top:795.6px;width:30px;height:1.6px;background:#777"></div>
<div class="li" style="left:338px;top:788px">Layer - Feb 21, 2022 02:11:02 - Feb 21, 2022 10:11:02</div>
<div class="ann" style="left:71px;top:671px;width:210px;height:32px;line-height:29px">Tag and attribute details</div>
<div class="ann" style="left:108px;top:780px;width:137px;height:31.5px;line-height:28.5px">Layer details</div>
</body></html>
